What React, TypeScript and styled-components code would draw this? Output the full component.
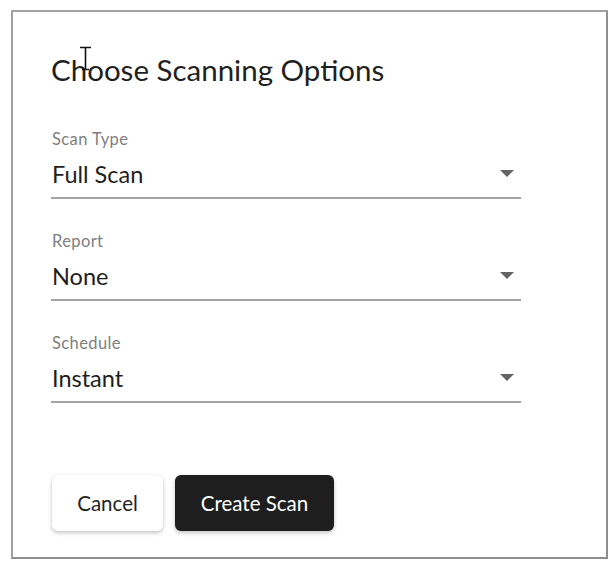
import React from "react";
import styled, { createGlobalStyle } from "styled-components";

const Global = createGlobalStyle`
  html, body { margin: 0; padding: 0; background: #ffffff; }
  body { font-family: Lato, "Liberation Sans", sans-serif; }
  * { box-sizing: border-box; }
`;

const Page = styled.div`
  padding: 10px 5px 4px 11px;
`;

const Dialog = styled.div`
  width: 597px;
  height: 549px;
  border: 2px solid #a2a2a2;
  border-right-color: #8e8e8e;
  border-bottom-color: #8e8e8e;
  background: #fff;
  padding: 40px 0 0 38px;
  display: flex;
  flex-direction: column;
`;

const TitleWrap = styled.div`
  position: relative;
`;

const Title = styled.h1`
  margin: 0;
  font-family: Lato, sans-serif;
  font-weight: 400;
  font-size: 29.5px;
  line-height: 35.4px;
  color: #1f1f1f;
`;

const Cursor = styled.svg`
  position: absolute;
  left: 28px;
  top: -6px;
`;

const Fields = styled.div`
  margin-top: 41.5px;
  display: flex;
  flex-direction: column;
  gap: 31.5px;
  width: 470px;
`;

const Field = styled.div`
  display: flex;
  flex-direction: column;
`;

const Label = styled.div`
  font-size: 16.5px;
  line-height: 20px;
  letter-spacing: 0.4px;
  color: #808080;
  padding-left: 1px;
`;

const SelectRow = styled.div`
  margin-top: 11px;
  display: flex;
  align-items: center;
  justify-content: space-between;
  padding: 0 7px 9.5px 1px;
  border-bottom: 2px solid #a4a4a4;
`;

const Value = styled.div`
  font-size: 23.5px;
  line-height: 28px;
  color: #1e1e1e;
`;

const Actions = styled.div`
  margin-top: 72px;
  display: flex;
  gap: 12px;
  padding-left: 1px;
`;

const Button = styled.button<{ $primary?: boolean }>`
  height: 56px;
  width: ${(p) => (p.$primary ? "159px" : "111px")};
  border: none;
  border-radius: 6px;
  font-family: Lato, sans-serif;
  font-size: 20.5px;
  background: ${(p) => (p.$primary ? "#1e1e1e" : "#ffffff")};
  color: ${(p) => (p.$primary ? "#ffffff" : "#242424")};
  box-shadow: 0 2px 4px rgba(0, 0, 0, 0.22), 0 0 1px rgba(0, 0, 0, 0.12);
  cursor: pointer;
`;

const Arrow = () => (
  <svg width="14" height="7" viewBox="0 0 14 7">
    <path d="M0 0 L14 0 L7 7 Z" fill="#646464" />
  </svg>
);

const fields = [
  { label: "Scan Type", value: "Full Scan" },
  { label: "Report", value: "None" },
  { label: "Schedule", value: "Instant" },
];

export default function App() {
  return (
    <>
      <Global />
      <Page>
        <Dialog>
          <TitleWrap>
            <Title>Choose Scanning Options</Title>
            <Cursor width="14" height="26" viewBox="0 0 14 26">
              <path d="M1 1.5 H12 M6.5 1.5 V23 M3 23.5 H10" stroke="#111" strokeWidth="1.6" fill="none" />
            </Cursor>
          </TitleWrap>
          <Fields>
            {fields.map((f) => (
              <Field key={f.label}>
                <Label>{f.label}</Label>
                <SelectRow>
                  <Value>{f.value}</Value>
                  <Arrow />
                </SelectRow>
              </Field>
            ))}
          </Fields>
          <Actions>
            <Button>Cancel</Button>
            <Button $primary>Create Scan</Button>
          </Actions>
        </Dialog>
      </Page>
    </>
  );
}
